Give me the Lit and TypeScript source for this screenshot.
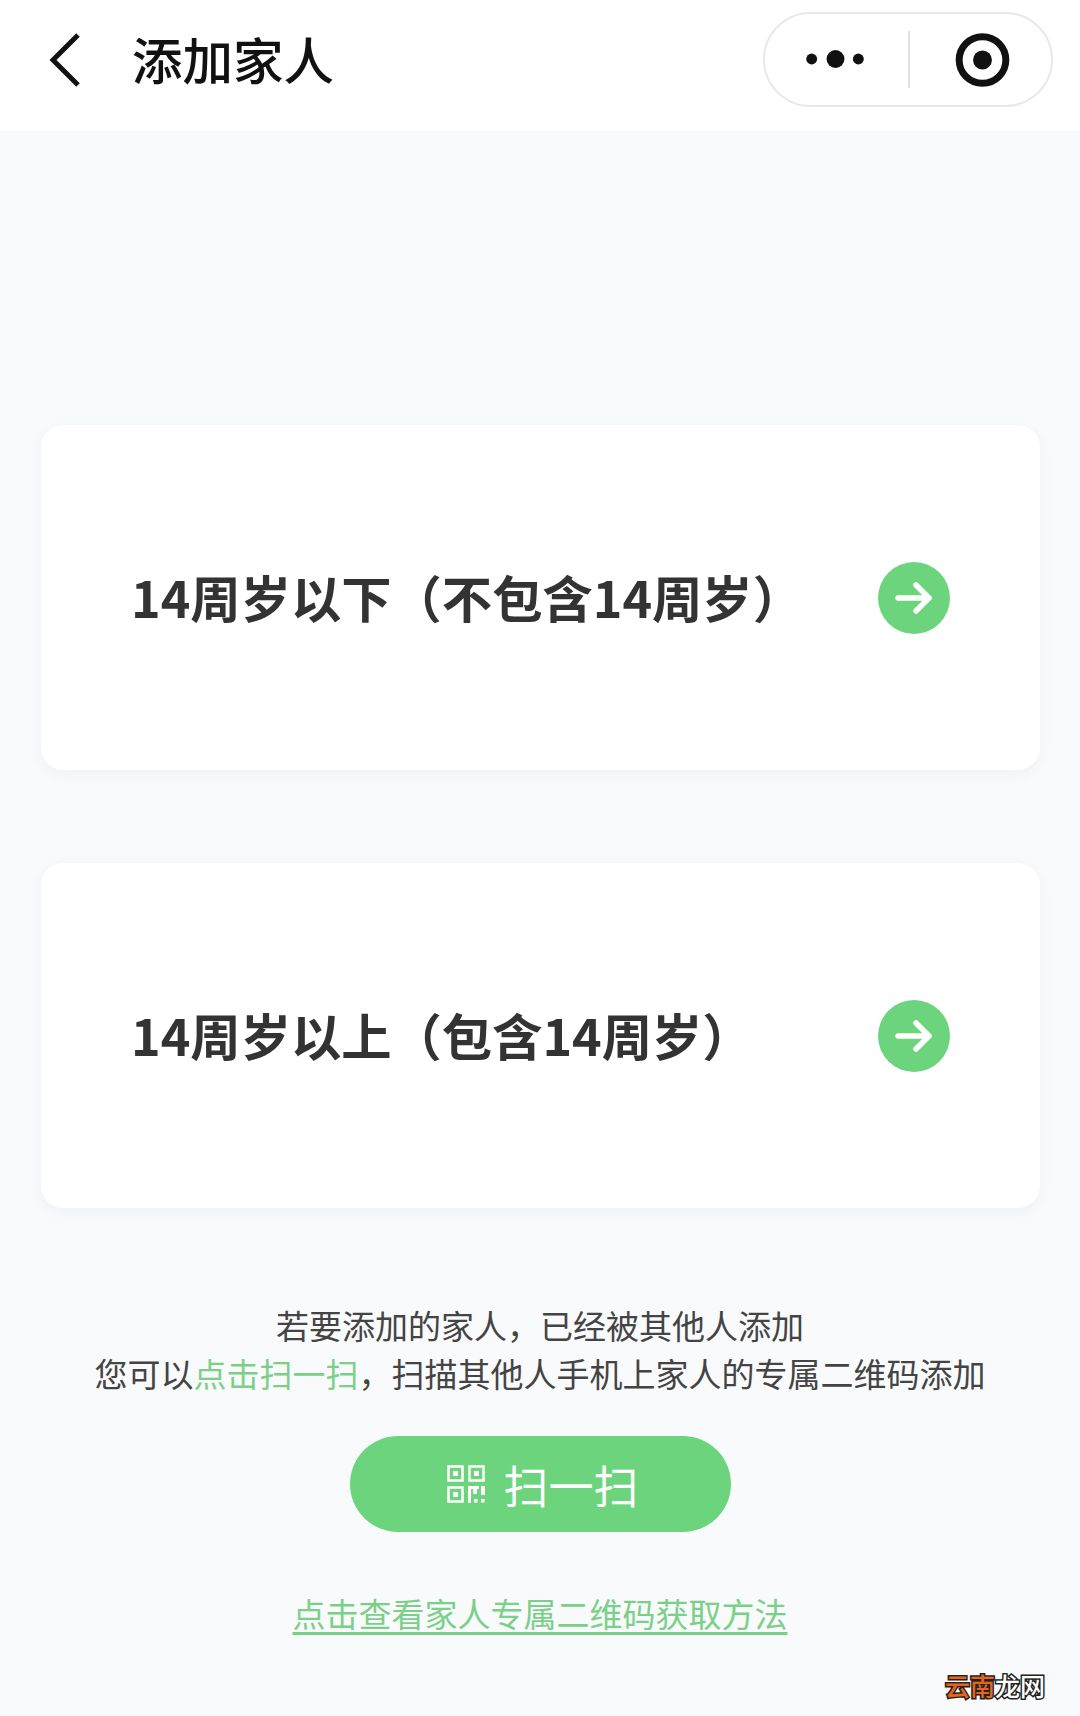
import { LitElement, html, css, svg } from 'lit';
import { customElement } from 'lit/decorators.js';

const arrow = svg`<circle cx="36" cy="36" r="36" fill="#6dd47e"/><path d="M20 36h31M38 23l13 13-13 13" fill="none" stroke="#fff" stroke-width="5.5" stroke-linecap="round" stroke-linejoin="round"/>`;

@customElement('app-root')
export class AppRoot extends LitElement {
  static styles = css`
    :host {
      display: block;
      width: 1080px;
      height: 1716px;
      position: relative;
      overflow: hidden;
      background: #f9fafc;
      font-family: 'Noto Sans CJK SC', 'Noto Sans', sans-serif;
      color: #333;
    }
    .nav {
      height: 131px;
      background: #fff;
      display: flex;
      align-items: center;
      padding: 0 27px 12px 48px;
      box-sizing: border-box;
    }
    .back {
      width: 34px;
      height: 56px;
      display: block;
    }
    .nav-title {
      margin-left: 50px;
      margin-top: -3px;
      font-size: 50.5px;
      font-weight: 500;
      line-height: 60px;
      color: #111;
      flex: 1;
    }
    .capsule {
      width: 290px;
      height: 95px;
      box-sizing: border-box;
      border: 2px solid #e8e8e8;
      border-radius: 48px;
      display: flex;
      align-items: center;
      background: #fff;
    }
    .capsule svg {
      display: block;
    }
    .dots {
      width: 144px;
      height: 57px;
      border-right: 2px solid #e2e2e2;
    }
    .target {
      width: 142px;
      height: 60px;
    }
    .cards {
      display: flex;
      flex-direction: column;
      gap: 93px;
      padding: 294px 40px 0 41px;
    }
    .card {
      height: 345px;
      background: #fff;
      border-radius: 22px;
      box-shadow: 0 4px 14px rgba(40, 50, 80, 0.05);
      display: flex;
      align-items: center;
      justify-content: space-between;
      padding: 0 90px 0 90px;
    }
    .card-title {
      margin-top: -3px;
      font-size: 50.3px;
      font-weight: 700;
      line-height: 70px;
      color: #333;
      white-space: nowrap;
    }
    .arrow {
      width: 72px;
      height: 72px;
      display: block;
      flex: none;
    }
    .notes {
      margin-top: 93px;
      text-align: center;
      font-size: 33px;
      line-height: 48px;
      color: #444;
    }
    .green {
      color: #7bd088;
    }
    .scan {
      margin: 39px auto 0;
      width: 381px;
      height: 96px;
      box-sizing: border-box;
      padding-left: 6px;
      border-radius: 48px;
      background: #6dd47e;
      color: #fff;
      display: flex;
      align-items: center;
      justify-content: center;
      gap: 18px;
      font-size: 45px;
    }
    .scan svg {
      width: 38px;
      height: 38px;
      display: block;
    }
    .link {
      margin-top: 57px;
      text-align: center;
      font-size: 33px;
      line-height: 48px;
      color: #7bd088;
      text-decoration: underline;
      text-underline-offset: 5px;
    }
    .mark {
      position: absolute;
      left: 945px;
      top: 1668px;
      font-size: 25px;
      line-height: 34px;
      font-weight: 500;
      white-space: nowrap;
      color: #fff;
      -webkit-text-stroke: 3px #222;
      paint-order: stroke fill;
    }
    .mark span {
      color: #e8641c;
    }
  `;

  private card(title: string) {
    return html`
      <div class="card">
        <div class="card-title">${title}</div>
        <svg class="arrow" viewBox="0 0 72 72">${arrow}</svg>
      </div>
    `;
  }

  render() {
    return html`
      <div class="nav">
        <svg class="back" viewBox="0 0 34 56">
          <path d="M30 3L5 28l25 25" fill="none" stroke="#111" stroke-width="5" />
        </svg>
        <div class="nav-title">添加家人</div>
        <div class="capsule">
          <svg class="dots" viewBox="0 0 144 57">
            <circle cx="47" cy="28" r="5.5" fill="#111" />
            <circle cx="71" cy="28" r="9" fill="#111" />
            <circle cx="94" cy="28" r="5.5" fill="#111" />
          </svg>
          <svg class="target" viewBox="0 0 142 60">
            <circle cx="73" cy="30" r="23.5" fill="none" stroke="#111" stroke-width="7" />
            <circle cx="73" cy="30" r="9.5" fill="#111" />
          </svg>
        </div>
      </div>
      <div class="cards">
        ${this.card('14周岁以下（不包含14周岁）')} ${this.card('14周岁以上（包含14周岁）')}
      </div>
      <div class="notes">
        <div>若要添加的家人，已经被其他人添加</div>
        <div>您可以<span class="green">点击扫一扫</span>，扫描其他人手机上家人的专属二维码添加</div>
      </div>
      <div class="scan">
        <svg viewBox="0 0 38 38" fill="none" stroke="#fff" stroke-width="2.5">
          <rect x="1.5" y="1.5" width="14" height="14" />
          <rect x="22.5" y="1.5" width="14" height="14" />
          <rect x="1.5" y="22.5" width="14" height="14" />
          <g fill="#fff" stroke="none">
            <rect x="6" y="6" width="5" height="5" />
            <rect x="27" y="6" width="5" height="5" />
            <rect x="6" y="27" width="5" height="5" />
            <rect x="21" y="21" width="3" height="17" />
            <rect x="21" y="21" width="11" height="3" />
            <rect x="26" y="24" width="4" height="5" />
            <rect x="34" y="21" width="4" height="9" />
            <rect x="27" y="34" width="3.5" height="3.5" />
            <rect x="34" y="34" width="3.5" height="3.5" />
          </g>
        </svg>
        <span>扫一扫</span>
      </div>
      <div class="link">点击查看家人专属二维码获取方法</div>
      <div class="mark"><span>云南</span>龙网</div>
    `;
  }
}
